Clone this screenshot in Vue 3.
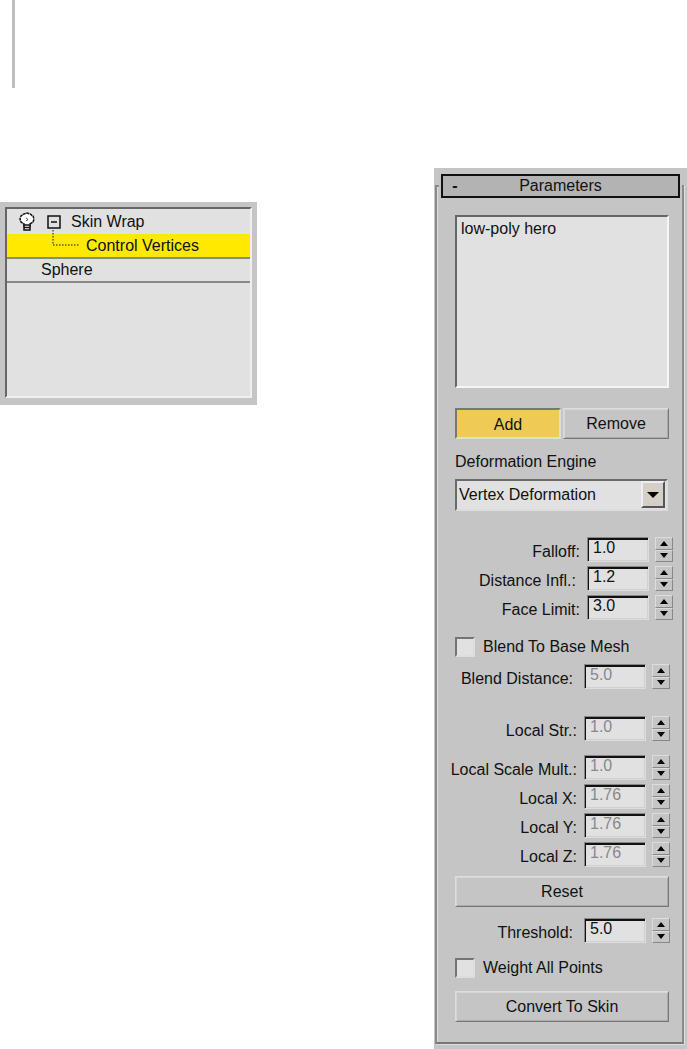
<script setup>
import { ref } from 'vue';

const meshes = ref(['low-poly hero']);
const adding = ref(true);
const engine = ref('Vertex Deformation');
const blendToBase = ref(false);
const weightAll = ref(false);

const falloffFields = ref([
  { id: 'falloff', label: 'Falloff:', value: '1.0' },
  { id: 'distance-infl', label: 'Distance Infl.:', value: '1.2', spaced: true },
  { id: 'face-limit', label: 'Face Limit:', value: '3.0' }
]);

const blendDistance = ref([
  { id: 'blend-distance', label: 'Blend Distance:', value: '5.0', disabled: true, spaced: true }
]);

const localStr = ref([
  { id: 'local-str', label: 'Local Str.:', value: '1.0', disabled: true }
]);

const localScale = ref([
  { id: 'local-scale', label: 'Local Scale Mult.:', value: '1.0', disabled: true },
  { id: 'local-x', label: 'Local X:', value: '1.76', disabled: true },
  { id: 'local-y', label: 'Local Y:', value: '1.76', disabled: true },
  { id: 'local-z', label: 'Local Z:', value: '1.76', disabled: true }
]);

const threshold = ref([
  { id: 'threshold', label: 'Threshold:', value: '5.0', spaced: true }
]);

const groups = {
  falloff: falloffFields,
  blend: blendDistance,
  str: localStr,
  scale: localScale,
  threshold
};

const step = (field, delta) => {
  if (field.disabled) return;
  field.value = (parseFloat(field.value) + delta).toFixed(1);
};

// rows of the rollout, top to bottom
const sections = [
  { type: 'fields', group: 'falloff' },
  { type: 'check', id: 'blend', label: 'Blend To Base Mesh', model: blendToBase },
  { type: 'fields', group: 'blend' },
  { type: 'fields', group: 'str' },
  { type: 'fields', group: 'scale' },
  { type: 'button', id: 'reset', label: 'Reset' },
  { type: 'fields', group: 'threshold' },
  { type: 'check', id: 'weight', label: 'Weight All Points', model: weightAll },
  { type: 'button', id: 'convert', label: 'Convert To Skin' }
];
</script>

<template>
  <div class="page">
    <div class="rule"></div>

    <div class="columns">
      <!-- modifier stack -->
      <section class="stack">
        <ul class="stack-list">
          <li class="stack-row">
            <svg class="bulb" width="18" height="20" viewBox="0 0 18 20">
              <path d="M6 14v-2L3 10 2 7l1-3 3-2 3-1 3 1 3 2 1 3-1 3-3 2v2z" fill="#fff" stroke="#111" stroke-width="1.5" stroke-dasharray="3 0.6" />
              <path d="M6 13h6v5H6zM6 15.500h6" fill="#fff" stroke="#111" stroke-width="1.500" />
              <path d="M8 6l2 1.500-2 1.500" fill="none" stroke="#555" />
            </svg>
            <svg class="toggle" width="14" height="14" viewBox="0 0 14 14">
              <rect x="1" y="1" width="12" height="12" fill="none" stroke="#111" stroke-width="1.500" />
              <path d="M4 7h6" stroke="#111" stroke-width="1.500" />
            </svg>
            <span>Skin Wrap</span>
          </li>
          <li class="stack-row active">
            <svg class="branch" width="27" height="24" viewBox="0 0 27 24">
              <path d="M1 0v15h26" fill="none" stroke="#111" stroke-dasharray="1.500 1.500" />
            </svg>
            <span>Control Vertices</span>
          </li>
          <li class="stack-row base"><span>Sphere</span></li>
        </ul>
      </section>

      <!-- parameters rollout -->
      <section class="rollout">
        <div class="frame">
          <button type="button" class="title">
            <span class="sign">-</span>
            <span class="name">Parameters</span>
          </button>

          <ul class="meshes">
            <li v-for="mesh in meshes" :key="mesh">{{ mesh }}</li>
          </ul>

          <div class="pair">
            <button type="button" class="btn" :class="{ pressed: adding }" @click="adding = !adding">Add</button>
            <button type="button" class="btn">Remove</button>
          </div>

          <label class="caption" for="engine">Deformation Engine</label>
          <div class="combo">
            <select id="engine" v-model="engine">
              <option>Vertex Deformation</option>
              <option>Face Deformation</option>
            </select>
            <span class="arrow">
              <svg width="12" height="6" viewBox="0 0 12 6"><path d="M0 0h12L6 6z" /></svg>
            </span>
          </div>

          <template v-for="(section, index) in sections" :key="index">
            <div v-if="section.type === 'fields'" class="fields" :class="section.group">
              <div v-for="field in groups[section.group].value" :key="field.id" class="field">
                <label :for="field.id" :class="{ spaced: field.spaced }">{{ field.label }}</label>
                <input :id="field.id" v-model="field.value" type="text" :disabled="field.disabled" />
                <div class="spinner">
                  <button type="button" :aria-label="'Increase ' + field.label" @click="step(field, 0.1)">
                    <svg width="8" height="5" viewBox="0 0 8 5"><path d="M4 0l4 5H0z" /></svg>
                  </button>
                  <button type="button" :aria-label="'Decrease ' + field.label" @click="step(field, -0.1)">
                    <svg width="8" height="5" viewBox="0 0 8 5"><path d="M0 0h8L4 5z" /></svg>
                  </button>
                </div>
              </div>
            </div>
            <label v-else-if="section.type === 'check'" class="check" :class="section.id">
              <input v-model="section.model.value" type="checkbox" />
              <span>{{ section.label }}</span>
            </label>
            <button v-else type="button" class="btn wide" :class="section.id">{{ section.label }}</button>
          </template>
        </div>
      </section>
    </div>
  </div>
</template>

<style>
body {
  background: #fff;
}
</style>

<style scoped>
.page,
.page button,
.page input,
.page select {
  font-family: 'Liberation Sans', Arial, sans-serif;
  font-size: 16px;
  color: #111;
}

.page * {
  box-sizing: border-box;
}

ul {
  margin: 0;
  padding: 0;
  list-style: none;
}

button {
  cursor: pointer;
}

.rule {
  width: 3px;
  height: 88px;
  margin-left: 12px;
  background: #bfbfbf;
}

.columns {
  display: grid;
  grid-template-columns: 257fr 253fr;
  column-gap: 177px;
  align-items: start;
  padding-top: 80px;
}

/* modifier stack */
.stack {
  margin-top: 34px;
  padding: 5px 5px 7px;
  background: #c5c5c5;
}

.stack-list {
  min-height: 191px;
  border: 2px solid;
  border-color: #666 #efefef #efefef #666;
  background: #e1e1e1;
}

.stack-row {
  display: flex;
  align-items: center;
  height: 25px;
  line-height: 24px;
  white-space: nowrap;
}

.stack-row .bulb {
  margin-left: 11px;
}

.stack-row .toggle {
  margin: 0 10px 0 11px;
}

.stack-row.active {
  background: #ffe900;
  border-bottom: 2px solid #888;
}

.stack-row .branch {
  align-self: flex-start;
  margin: -4px 7px 0 45px;
}

.stack-row.base {
  height: 24px;
  padding-left: 34px;
  border-bottom: 2px solid #888;
}

/* rollout */
.rollout {
  padding: 17px 3px 5px 1px;
  background: #c5c5c5;
}

.frame {
  display: flex;
  flex-direction: column;
  padding: 0 9px 20px 12px;
  border: 2px solid;
  border-color: #8a8a8a #8a8a8a #777 #8a8a8a;
  box-shadow: inset 1px 1px 0 #ddd, 1px 1px 0 #ddd;
}

.title {
  display: flex;
  align-items: center;
  height: 24px;
  margin: -13px -7px 0 -8px;
  padding: 0 8px;
  border: 2px solid #111;
  background: #b3b3b3;
  box-shadow: 0 0 0 2px #c5c5c5;
}

.title .sign {
  width: 8px;
  font-weight: bold;
}

.title .name {
  flex: 1;
  padding-right: 8px;
  text-align: center;
}

.meshes {
  height: 173px;
  margin: 17px 4px 0 6px;
  padding: 2px 4px;
  line-height: 20px;
  border: 2px solid;
  border-color: #666 #f5f5f5 #f5f5f5 #666;
  background: #e1e1e1;
}

.pair {
  display: grid;
  grid-template-columns: 1fr 1fr;
  gap: 2px;
  margin: 20px 4px 0 6px;
}

.btn {
  height: 31px;
  padding: 0;
  border: 1px solid;
  border-color: #ddd #777 #777 #ddd;
  background: #c5c5c5;
  box-shadow: inset 1px 1px 0 #d5d5d5, inset -1px -1px 0 #aaa;
}

.btn.pressed {
  padding-top: 2px;
  border-width: 2px;
  border-color: #777 #ddd #ddd #777;
  background: #efcb55;
  box-shadow: none;
}

.btn.wide {
  margin: 0 4px 0 6px;
}

.caption {
  margin: 13px 0 0 6px;
  line-height: 20px;
}

.combo {
  display: flex;
  height: 32px;
  margin: 7px 5px 0 6px;
  border: 2px solid;
  border-color: #666b70 #ddd #ddd #666b70;
  background: #e1e1e1;
}

.combo select {
  flex: 1;
  min-width: 0;
  padding: 0 0 2px 2px;
  border: 0;
  background: transparent;
  appearance: none;
}

.combo .arrow {
  display: flex;
  align-items: center;
  justify-content: center;
  width: 24px;
  margin: 0 1px 1px 0;
  border: 2px solid;
  border-color: #eee #555 #555 #eee;
  background: #d4d0c8;
  pointer-events: none;
}

.fields {
  display: flex;
  flex-direction: column;
  gap: 4px;
  margin-right: 3px;
}

.fields.falloff {
  margin: 26px 0 0;
}

.fields.blend {
  margin-top: 7px;
}

.fields.str {
  margin-top: 27px;
}

.fields.scale {
  margin-top: 14px;
}

.fields.threshold {
  margin-top: 11px;
}

.field {
  display: flex;
  justify-content: flex-end;
  height: 25px;
}

.field label {
  margin-right: 7px;
  padding-top: 5px;
  line-height: 20px;
  white-space: nowrap;
}

.field label.spaced {
  margin-right: 11px;
}

.field input {
  width: 62px;
  height: 25px;
  padding: 0 5px 3px;
  border: 1px solid;
  border-color: #888 #ddd #ddd #888;
  border-radius: 0;
  background: #e1e1e1;
  box-shadow: inset 1px 2px 0 #111, inset -1px -1px 0 #d0d0d0;
}

.field input:disabled {
  color: #888;
}

.spinner {
  display: grid;
  grid-template-rows: 1fr 1fr;
  width: 18px;
  margin-left: 6px;
}

.spinner button {
  display: flex;
  align-items: center;
  justify-content: center;
  min-height: 0;
  padding: 0;
  border: 1px solid;
  border-color: #ddd #888 #888 #ddd;
  background: #c5c5c5;
}

.check {
  display: flex;
  align-items: center;
  gap: 8px;
  height: 20px;
  margin: 17px 0 0 6px;
}

.check.weight {
  margin-top: 15px;
}

.check input {
  width: 20px;
  height: 20px;
  margin: 0;
  border: 2px solid;
  border-color: #70757a #ddd #ddd #70757a;
  background: #e1e1e1;
  appearance: none;
}

.check input:checked {
  background: #666;
}

.btn.reset {
  margin-top: 9px;
}

.btn.convert {
  margin-top: 13px;
}
</style>
